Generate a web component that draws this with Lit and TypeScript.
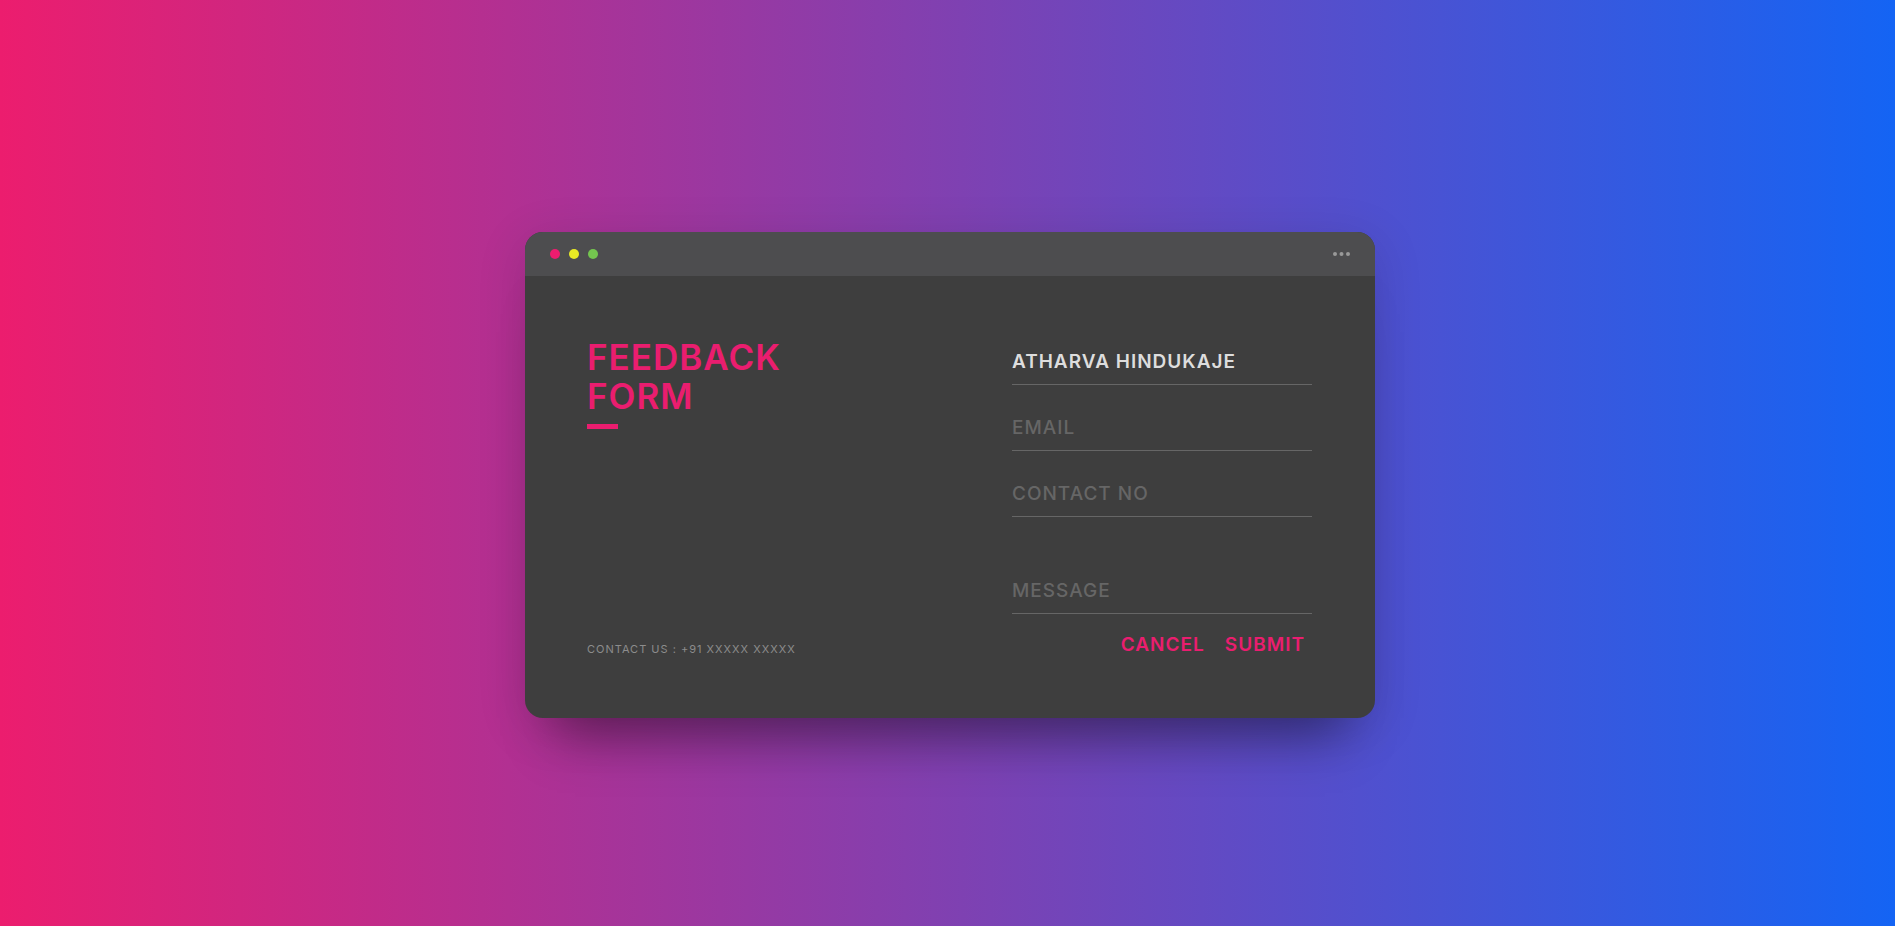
import { LitElement, html, css } from "lit";
import { customElement } from "lit/decorators.js";

@customElement("app-root")
export class AppRoot extends LitElement {
  static styles = css`
    :host {
      --accent: #ea1d6f;
      display: flex;
      align-items: center;
      justify-content: center;
      box-sizing: border-box;
      min-height: 100vh;
      padding: 24px 0 0 5px;
      background: linear-gradient(to right, #ec1d6e, #1464f4);
      font-family: Inter, "Open Sans", sans-serif;
      letter-spacing: 1px;
      text-transform: uppercase;
    }
    .screen {
      width: 100%;
      max-width: 850px;
      overflow: hidden;
      border-radius: 18px;
      background: #3e3e3e;
      box-shadow: 0 50px 50px -32px rgba(0, 0, 0, 0.38), 0 10px 50px rgba(0, 0, 0, 0.14);
    }
    .bar {
      display: flex;
      align-items: center;
      justify-content: space-between;
      height: 44px;
      padding: 0 25px;
      background: #4d4d4f;
    }
    .lights {
      display: flex;
      gap: 9px;
    }
    .light {
      width: 10px;
      height: 10px;
      border-radius: 50%;
    }
    .close { background: #ed1c6f; }
    .minimise { background: #e8e925; }
    .maximise { background: #74c54f; }
    .more { display: block; }
    .body {
      display: grid;
      grid-template-columns: 1fr 300px;
      gap: 24px;
      padding: 62px 63px 62px 62px;
    }
    .intro {
      display: flex;
      flex-direction: column;
      justify-content: space-between;
      align-items: flex-start;
    }
    h1 {
      margin: 0;
      color: var(--accent);
      font-size: 35px;
      font-weight: 600;
      line-height: 39px;
    }
    h1::after {
      content: "";
      display: block;
      width: 31px;
      height: 5px;
      margin-top: 8px;
      background: var(--accent);
    }
    .contact {
      margin: 0;
      color: #8c8c8c;
      font-size: 11px;
      font-weight: 400;
      line-height: 13px;
    }
    form {
      display: flex;
      flex-direction: column;
      gap: 19px;
    }
    input {
      box-sizing: border-box;
      width: 100%;
      height: 47px;
      padding: 0;
      border: 0;
      border-bottom: 1px solid #666;
      border-radius: 0;
      outline: 0;
      background: none;
      color: #ddd;
      font: 600 19px/24px Inter, "Open Sans", sans-serif;
      letter-spacing: inherit;
      text-transform: inherit;
    }
    input::placeholder {
      color: #666;
      font-weight: 500;
      opacity: 1;
    }
    .message { margin-top: 31px; }
    .actions {
      display: flex;
      justify-content: flex-end;
      gap: 20px;
      padding-right: 7px;
    }
    button {
      padding: 0;
      border: 0;
      background: none;
      color: var(--accent);
      font: 600 19px/23px Inter, "Open Sans", sans-serif;
      letter-spacing: inherit;
      text-transform: inherit;
      cursor: pointer;
    }
  `;

  render() {
    return html`
      <main class="screen">
        <header class="bar">
          <div class="lights">
            <span class="light close"></span>
            <span class="light minimise"></span>
            <span class="light maximise"></span>
          </div>
          <svg class="more" width="17" height="4" viewBox="0 0 17 4" fill="#999" aria-hidden="true">
            <circle cx="2" cy="2" r="2" />
            <circle cx="8.5" cy="2" r="2" />
            <circle cx="15" cy="2" r="2" />
          </svg>
        </header>
        <div class="body">
          <section class="intro">
            <h1>Feedback<br />Form</h1>
            <p class="contact">Contact us : +91 xxxxx xxxxx</p>
          </section>
          <form @submit=${(e: Event) => e.preventDefault()}>
            <input aria-label="Name" placeholder="Name" value="Atharva Hindukaje" />
            <input aria-label="Email" type="email" placeholder="Email" />
            <input aria-label="Contact no" type="tel" placeholder="Contact no" />
            <input class="message" aria-label="Message" placeholder="Message" />
            <div class="actions">
              <button type="reset">Cancel</button>
              <button type="submit">Submit</button>
            </div>
          </form>
        </div>
      </main>
    `;
  }
}
